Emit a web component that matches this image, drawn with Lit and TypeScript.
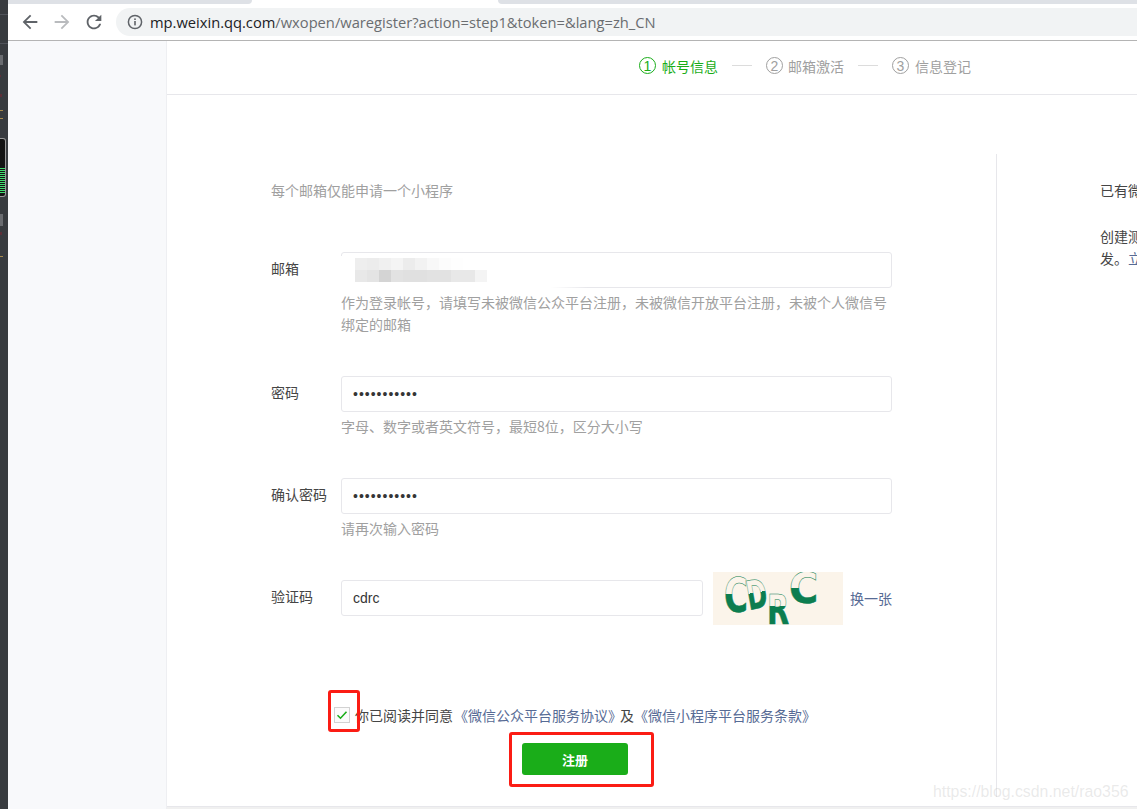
import { LitElement, html, css } from "lit";
import { customElement } from "lit/decorators.js";

const MOSAIC: number[][] = [
  [238, 236, 240, 244, 236, 242, 248, 252, 254, 255, 255],
  [232, 228, 212, 226, 224, 224, 226, 226, 232, 232, 244],
];

@customElement("app-root")
export class AppRoot extends LitElement {
  static styles = css`
    :host {
      display: block;
      position: relative;
      width: 1137px;
      height: 809px;
      overflow: hidden;
      background: #f0f0f0;
      font-family: "Noto Sans CJK SC", "Liberation Sans", sans-serif;
      font-size: 14px;
      color: #454545;
    }
    .shell { display: flex; height: 809px; }
    .strip {
      width: 8px;
      flex: none;
      background-color: #383b3f;
      background-image:
        linear-gradient(#50535a, #50535a), linear-gradient(#50535a, #50535a),
        linear-gradient(#6a6c70, #6a6c70), linear-gradient(#5e2f38, #5e2f38),
        linear-gradient(#5e2f38, #5e2f38), linear-gradient(#a88a4c, #a88a4c),
        linear-gradient(#a88a4c, #a88a4c), linear-gradient(#6a6c70, #6a6c70),
        linear-gradient(#5e2f38, #5e2f38), linear-gradient(#a88a4c, #a88a4c);
      background-repeat: no-repeat;
      background-size: 8px 1px, 8px 1px, 3px 10px, 1px 2px, 2px 3px, 3px 1px, 3px 1px, 3px 12px, 2px 3px, 3px 1px;
      background-position: 0 14px, 0 43px, 0 55px, 0 75px, 0 94px, 0 110px, 0 118px, 0 214px, 0 232px, 0 256px;
      display: flex;
      flex-direction: column;
      overflow: hidden;
      padding-top: 138px;
      box-sizing: border-box;
    }
    .device {
      width: 7px;
      height: 59px;
      margin-left: -1px;
      box-sizing: border-box;
      background: #131313;
      border: 1px solid #9a9a9a;
      border-left: none;
      border-radius: 0 3px 3px 0;
      padding-top: 29px;
    }
    .bars {
      height: 26px;
      background: repeating-linear-gradient(#3fdc6e 0 1px, #131313 1px 2px);
    }
    .main { flex: 1; min-width: 0; display: flex; flex-direction: column; }
    .tabs { height: 4px; display: flex; background: #fff; flex: none; }
    .tab-off { background: #dee1e6; }
    .tab-off.a { width: 244px; border-radius: 0 0 6px 0; }
    .tab-on { width: 246px; }
    .tab-off.b { flex: 1; border-radius: 0 0 0 6px; }
    .toolbar {
      height: 37px;
      flex: none;
      box-sizing: border-box;
      background: #fff;
      border-bottom: 1px solid #b4b4b4;
      display: flex;
      align-items: flex-start;
      padding: 4px 0 0 6px;
    }
    .nav { width: 32px; height: 28px; display: flex; align-items: center; justify-content: center; flex: none; }
    .nav svg { width: 22px; height: 22px; fill: #5f6368; }
    .nav.off svg { fill: #b9bbbe; }
    .omni {
      flex: 1;
      height: 28px;
      margin-left: 6px;
      background: #f1f3f4;
      border-radius: 14px 0 0 14px;
      display: flex;
      align-items: center;
      padding-left: 11px;
      font-family: "Open Sans", "Liberation Sans", sans-serif;
      font-size: 14.7px;
      color: #6a6d70;
      white-space: nowrap;
    }
    .omni svg { width: 16px; height: 16px; margin-right: 7px; flex: none; }
    .omni b { font-weight: 400; color: #202124; }
    .content { flex: 1; min-height: 0; display: flex; }
    .side { width: 159px; flex: none; background: #f8f9fb; border-right: 1px solid #eeeff2; box-sizing: border-box; }
    .card {
      flex: 1;
      min-width: 0;
      background: #fff;
      display: flex;
      flex-direction: column;
      margin-bottom: 2px;
      border-bottom: 1px solid #e7e7eb;
    }
    .steps {
      height: 54px;
      flex: none;
      box-sizing: border-box;
      border-bottom: 1px solid #e7e7eb;
      display: flex;
      align-items: center;
      padding: 0 0 4px 472px;
      color: #a0a0a0;
    }
    .step { display: flex; align-items: center; }
    .circle {
      width: 17px;
      height: 17px;
      box-sizing: border-box;
      border: 1px solid #a0a0a0;
      border-radius: 50%;
      display: flex;
      align-items: center;
      justify-content: center;
      font-size: 14px;
      line-height: 1;
      margin-right: 6px;
      font-family: "Liberation Sans", sans-serif;
    }
    .step.tight .circle { margin-right: 5px; }
    .step.on { color: #1aad19; }
    .step.on .circle { border-color: #1aad19; }
    .dash { width: 20px; height: 1px; background: #dcdcdc; margin: 0 14px; }
    .body { flex: 1; min-height: 0; display: flex; padding: 59px 0 9px 104px; }
    .form {
      width: 621px;
      flex: none;
      padding-top: 25px;
      display: flex;
      flex-direction: column;
    }
    .tag { line-height: 22px; color: #a0a0a0; margin-bottom: 51px; }
    .row { display: flex; margin-bottom: 41px; }
    .row.last { margin-bottom: 0; }
    .row > label { width: 70px; flex: none; line-height: 32px; }
    .field { flex: 1; min-width: 0; }
    .box { position: relative; }
    input {
      display: block;
      width: 100%;
      height: 36px;
      box-sizing: border-box;
      border: 1px solid #e7e7eb;
      border-radius: 3px;
      padding: 0 11px;
      font: 14px "Liberation Sans", sans-serif;
      color: #353535;
      background: #fff;
      outline: none;
    }
    input[type="password"] { letter-spacing: 1px; }
    .hint { line-height: 22px; color: #a0a0a0; margin-top: 3px; }
    .smear {
      position: absolute;
      left: -3px;
      top: 4px;
      width: 250px;
      height: 34px;
      background: linear-gradient(90deg, #fff 0 85%, rgba(255, 255, 255, 0));
    }
    .mosaic {
      position: absolute;
      left: 14px;
      top: 6px;
      display: grid;
      grid-template-columns: repeat(11, 12px);
      grid-auto-rows: 12px;
    }
    .captcha { display: flex; align-items: flex-start; }
    .captcha input { width: 362px; flex: none; }
    .captcha svg { width: 130px; height: 53px; margin: -8px 7px 0 10px; flex: none; display: block; }
    .swap { line-height: 36px; color: #576b95; white-space: nowrap; }
    .agree {
      display: flex;
      align-items: center;
      height: 22px;
      margin: 79px 0 0 63px;
      white-space: nowrap;
    }
    .check {
      width: 16px;
      height: 16px;
      box-sizing: border-box;
      border: 1px solid #d2d2d2;
      background: #fbfbfb;
      margin-right: 5px;
      flex: none;
      display: flex;
      align-items: center;
      justify-content: center;
    }
    .check svg { width: 12px; height: 12px; }
    .agree a, .col a { color: #576b95; text-decoration: none; }
    .and { margin: 0 0 0 -2px; }
    .first { margin-left: 1px; }
    .submit {
      width: 106px;
      height: 32px;
      margin: 17px 0 0 251px;
      border: none;
      border-radius: 3px;
      background: #1aad19;
      color: #fff;
      font: 700 13px "Noto Sans CJK SC", sans-serif;
      padding: 0;
    }
    .rule { width: 1px; flex: none; margin-left: 104px; background: #e7e7eb; }
    .col { width: 238px; flex: none; margin-left: 103px; padding-top: 25px; line-height: 22px; }
    .col p { margin: 0 0 24px; white-space: nowrap; }
    .red {
      position: absolute;
      box-sizing: border-box;
      border: 3px solid #fb1c14;
      border-radius: 3px;
    }
    .red.a { left: 328px; top: 690px; width: 32px; height: 42px; }
    .red.b { left: 509px; top: 732px; width: 145px; height: 55px; }
    .mark {
      position: absolute;
      left: 933px;
      top: 780px;
      font: 15.85px/24px "Liberation Sans", sans-serif;
      color: rgba(190, 190, 190, 0.32);
      white-space: nowrap;
    }
  `;

  render() {
    return html`
      <div class="shell">
        <div class="strip"><div class="device"><div class="bars"></div></div></div>
        <div class="main">
          <div class="tabs"><div class="tab-off a"></div><div class="tab-on"></div><div class="tab-off b"></div></div>
          <div class="toolbar">
            <div class="nav"><svg viewBox="0 0 24 24"><path d="M20 11H7.83l5.59-5.59L12 4l-8 8 8 8 1.41-1.41L7.83 13H20v-2z"/></svg></div>
            <div class="nav off"><svg viewBox="0 0 24 24"><path d="M12 4l-1.41 1.41L16.17 11H4v2h12.17l-5.58 5.59L12 20l8-8z"/></svg></div>
            <div class="nav"><svg viewBox="0 0 24 24"><path d="M17.65 6.35A7.958 7.958 0 0 0 12 4c-4.42 0-7.99 3.58-7.99 8s3.57 8 7.99 8c3.73 0 6.84-2.55 7.73-6h-2.08A5.99 5.99 0 0 1 12 18c-3.31 0-6-2.69-6-6s2.69-6 6-6c1.66 0 3.14.69 4.22 1.78L13 11h7V4l-2.35 2.35z"/></svg></div>
            <div class="omni">
              <svg viewBox="0 0 16 16"><circle cx="8" cy="8" r="6.6" fill="none" stroke="#5f6368" stroke-width="1.5"/><rect x="7.2" y="7" width="1.6" height="4.4" fill="#5f6368"/><rect x="7.2" y="4.4" width="1.6" height="1.6" fill="#5f6368"/></svg>
              <span><b>mp.weixin.qq.com</b>/wxopen/waregister?action=step1&amp;token=&amp;lang=zh_CN</span>
            </div>
          </div>
          <div class="content">
            <div class="side"></div>
            <div class="card">
              <div class="steps">
                <div class="step on"><span class="circle">1</span>帐号信息</div>
                <div class="dash"></div>
                <div class="step tight"><span class="circle">2</span>邮箱激活</div>
                <div class="dash"></div>
                <div class="step"><span class="circle">3</span>信息登记</div>
              </div>
              <div class="body">
                <div class="form">
                  <div class="tag">每个邮箱仅能申请一个小程序</div>
                  <div class="row">
                    <label>邮箱</label>
                    <div class="field">
                      <div class="box">
                        <input type="text" />
                        <div class="smear"></div>
                        <div class="mosaic">
                          ${MOSAIC.flat().map((v) => html`<i style="background: rgb(${v},${v},${v})"></i>`)}
                        </div>
                      </div>
                      <div class="hint">作为登录帐号\uFF0C请填写未被微信公众平台注册\uFF0C未被微信开放平台注册\uFF0C未被个人微信号绑定的邮箱</div>
                    </div>
                  </div>
                  <div class="row">
                    <label>密码</label>
                    <div class="field">
                      <input type="password" .value=${"aaaaaaaaaaa"} />
                      <div class="hint">字母、数字或者英文符号\uFF0C最短8位\uFF0C区分大小写</div>
                    </div>
                  </div>
                  <div class="row">
                    <label>确认密码</label>
                    <div class="field">
                      <input type="password" .value=${"aaaaaaaaaaa"} />
                      <div class="hint">请再次输入密码</div>
                    </div>
                  </div>
                  <div class="row last">
                    <label>验证码</label>
                    <div class="field captcha">
                      <input type="text" .value=${"cdrc"} />
                      <svg viewBox="0 0 130 53">
                        <defs>
                          <linearGradient id="g1" gradientUnits="userSpaceOnUse" x1="0" y1="-19" x2="0" y2="-17"><stop offset="0.5" stop-color="#fbf4ea"/><stop offset="0.5" stop-color="#0c7d4f"/></linearGradient>
                          <linearGradient id="g2" gradientUnits="userSpaceOnUse" x1="0" y1="-17" x2="0" y2="-15"><stop offset="0.5" stop-color="#fbf4ea"/><stop offset="0.5" stop-color="#0c7d4f"/></linearGradient>
                          <linearGradient id="g3" gradientUnits="userSpaceOnUse" x1="0" y1="-19" x2="0" y2="-17"><stop offset="0.5" stop-color="#fbf4ea"/><stop offset="0.5" stop-color="#0c7d4f"/></linearGradient>
                          <linearGradient id="g4" gradientUnits="userSpaceOnUse" x1="0" y1="-16" x2="0" y2="-14"><stop offset="0.5" stop-color="#fbf4ea"/><stop offset="0.5" stop-color="#0c7d4f"/></linearGradient>
                        </defs>
                        <rect width="130" height="53" fill="#fbf4ea"/>
                        <g font-family="DejaVu Sans" font-weight="700" stroke="#0c7d4f" stroke-width="0.5">
                          <text font-size="48" fill="url(#g1)" transform="translate(11 40) scale(0.68 1)">C</text>
                          <text font-size="40" fill="url(#g2)" transform="translate(36 38) rotate(-10) scale(0.62 1)">D</text>
                          <text font-size="40" fill="url(#g3)" transform="translate(54 52) scale(0.72 1)">R</text>
                          <text font-size="42" fill="url(#g4)" transform="translate(76 31) scale(0.95 1)">C</text>
                        </g>
                      </svg>
                      <a class="swap">换一张</a>
                    </div>
                  </div>
                  <div class="agree">
                    <span class="check"><svg viewBox="0 0 12 12"><path d="M1.5 6.2l3 3L10.5 2.8" fill="none" stroke="#1aad19" stroke-width="1.6"/></svg></span>
                    <span>你已阅读并同意<a class="first">《微信公众平台服务协议》</a><span class="and">及</span><a>《微信小程序平台服务条款》</a></span>
                  </div>
                  <button class="submit">注册</button>
                </div>
                <div class="rule"></div>
                <div class="col">
                  <p>已有微信小程序\uFF1F<a>立即登录</a></p>
                  <div>创建测试号\uFF0C免注册快速体验小程序开发。<a>立即申请</a></div>
                </div>
              </div>
            </div>
          </div>
        </div>
      </div>
      <div class="red a"></div>
      <div class="red b"></div>
      <div class="mark">https://blog.csdn.net/rao356</div>
    `;
  }
}
